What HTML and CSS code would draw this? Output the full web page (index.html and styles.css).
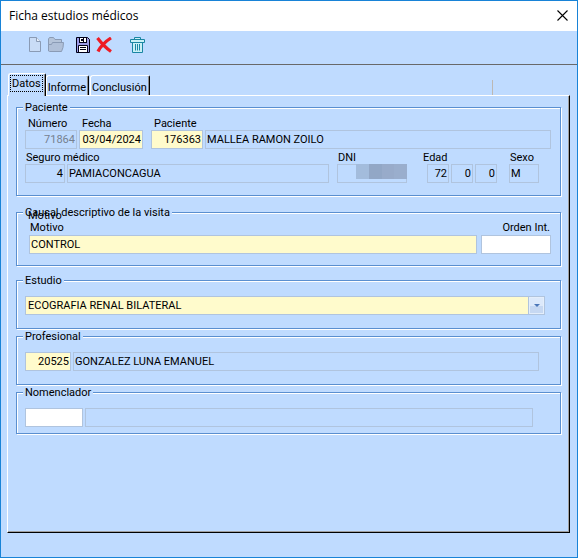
FILE: index.html
```html
<!DOCTYPE html>
<html lang="es">
<head>
<meta charset="utf-8">
<title>Ficha estudios médicos</title>
<link rel="stylesheet" href="styles.css">
</head>
<body>
<main class="window">
  <header class="titlebar">
    <h1>Ficha estudios médicos</h1>
    <button class="close" type="button" aria-label="Cerrar">
      <svg width="11" height="11" viewBox="0 0 11 11"><path d="M.5.5l10 10M10.500.5l-10 10" stroke="#000" stroke-width="1.1"/></svg>
    </button>
  </header>

  <div class="toolbar">
    <div class="tools">
      <button type="button" aria-label="Nuevo">
        <svg width="16" height="16" viewBox="0 0 16 16"><path d="M2.500.5h7l4 4v10h-11z" fill="#c9dcf6" stroke="#8a9bb5"/><path d="M9.500.5v4h4" fill="#e6effb" stroke="#8a9bb5"/></svg>
      </button>
      <button type="button" aria-label="Abrir">
        <svg width="16" height="16" viewBox="0 0 16 16"><path d="M.5 13V2l1-1.500h4l1.500 2h6.500v3" fill="#b5c4d9" stroke="#8a9bb5"/><path d="M.5 14V7.500h3l1-2h11l-.5 5-1.500 4H1.500z" fill="#b0c0d8" stroke="#8a9bb5"/></svg>
      </button>
    </div>
    <div class="tools">
      <button type="button" aria-label="Guardar">
        <svg width="16" height="16" viewBox="0 0 16 16"><path d="M1.500.5h11l2 2v13h-13z" fill="#9a9ae6" stroke="#000018"/><path d="M4 0h8v6H4z" fill="#000018"/><path d="M5 1h3v4H5zM9 1h2v4H9z" fill="#fff"/><path d="M6 2h2v2H6z" fill="#000018"/><path d="M3.500 15V8.500h9V15" fill="#fff" stroke="#000018"/><path d="M5 10.500h6M5 12.500h6" stroke="#000018"/></svg>
      </button>
      <button type="button" aria-label="Eliminar">
        <svg width="16" height="16" viewBox="0 0 16 16"><path d="M1.500 1c3 4 8.500 10 13.500 13.500M15 1C10 4 4 10 2 14.500" fill="none" stroke="#ee1c25" stroke-width="3.200"/></svg>
      </button>
    </div>
    <div class="tools tools-far">
      <button type="button" aria-label="Papelera">
        <svg width="16" height="16" viewBox="0 0 16 16"><path d="M3.500 5h10v10.500h-10z" fill="#c9f0f5" stroke="#1a86a3"/><path d="M1.500 2.500h14v3h-14zM5.500 2V.500h6V2" fill="#c9f0f5" stroke="#1a86a3"/><path d="M6.500 7v6.500M8.500 7v6.500M10.500 7v6.500" stroke="#1a86a3"/></svg>
      </button>
    </div>
  </div>

  <div class="tabs" role="tablist">
    <button class="tab active" type="button" role="tab" aria-selected="true"><span>Datos</span></button>
    <button class="tab" type="button" role="tab" aria-selected="false"><span>Informe</span></button>
    <button class="tab" type="button" role="tab" aria-selected="false"><span>Conclusión</span></button>
    <i class="strip-end"></i>
  </div>

  <form class="panel">
    <fieldset class="group patient">
      <legend>Paciente</legend>
      <div class="row">
        <div class="field w52"><label class="indent" for="numero">Número</label><input id="numero" class="num" value="71864" disabled></div>
        <div class="field w64"><label class="indent" for="fecha">Fecha</label><input id="fecha" class="num edit" value="03/04/2024"></div>
        <div class="field w52 spaced"><label class="indent" for="paciente">Paciente</label><input id="paciente" class="num edit" value="176363"></div>
        <div class="field grow"><input aria-label="Nombre del paciente" value="MALLEA RAMON ZOILO" readonly></div>
      </div>
      <div class="row insurance">
        <div class="field w40"><label for="seguro">Seguro médico</label><input id="seguro" class="num" value="4" readonly></div>
        <div class="field grow"><input aria-label="Nombre del seguro" value="PAMIACONCAGUA" readonly></div>
        <div class="field w70 spaced"><label for="dni">DNI</label><div class="masked"><input id="dni" readonly><span class="mask"><i></i><i></i><i></i><i></i></span></div></div>
        <div class="age">
          <label for="anios">Edad</label>
          <div class="row">
            <input id="anios" class="num" value="72" readonly>
            <input class="num" aria-label="Meses" value="0" readonly>
            <input class="num" aria-label="Días" value="0" readonly>
          </div>
        </div>
        <div class="field w30"><label for="sexo">Sexo</label><input id="sexo" value="M" readonly></div>
      </div>
    </fieldset>

    <fieldset class="group visit">
      <legend>Causal descriptivo de la visita</legend>
      <span class="ghost">Motivo</span>
      <div class="row">
        <div class="field grow"><label for="motivo">Motivo</label><input id="motivo" class="edit" value="CONTROL"></div>
        <div class="field w70"><label class="end" for="orden">Orden Int.</label><input id="orden" class="blank"></div>
      </div>
    </fieldset>

    <fieldset class="group study">
      <legend>Estudio</legend>
      <div class="combo">
        <select class="edit" aria-label="Estudio"><option>ECOGRAFIA RENAL BILATERAL</option></select>
      </div>
    </fieldset>

    <fieldset class="group professional">
      <legend>Profesional</legend>
      <div class="row">
        <div class="field w46"><input class="num edit" aria-label="Código profesional" value="20525"></div>
        <div class="field grow"><input aria-label="Nombre del profesional" value="GONZALEZ LUNA EMANUEL" readonly></div>
      </div>
    </fieldset>

    <fieldset class="group nomenclator">
      <legend>Nomenclador</legend>
      <div class="row">
        <div class="field w58"><input class="blank" aria-label="Código nomenclador"></div>
        <div class="field grow"><input aria-label="Descripción nomenclador" readonly></div>
      </div>
    </fieldset>
  </form>
</main>
</body>
</html>
```
FILE: styles.css
```css
:root {
  --face: #bfdbff;
  --line: #b0c4de;
  --etch: #5a8fd0;
  --edit: #fffbcc;
}

* { box-sizing: border-box; }

body {
  margin: 0;
  font: 11px/13px Roboto, "Liberation Sans", sans-serif;
  color: #000;
}

button, input, select { font: inherit; color: inherit; margin: 0; border-radius: 0; }

.window {
  display: flex;
  flex-direction: column;
  min-height: 100vh;
  border: 1px solid #1883d7;
  background: var(--face);
}

.titlebar {
  display: flex;
  align-items: center;
  justify-content: space-between;
  height: 30px;
  padding: 0 8px;
  background: #fff;
}

.titlebar h1 {
  margin: 0;
  font: 12px/16px "Open Sans", "Noto Sans", sans-serif;
}

.close { padding: 0 1px 2px; border: 0; background: none; }
.close svg, .tools svg { display: block; }

.toolbar {
  display: flex;
  gap: 11px;
  height: 34px;
  padding: 6px 26px 0;
  border-bottom: 1px solid #696969;
}

.tools { display: flex; gap: 5px; align-items: flex-start; }
.tools-far { margin-left: 6px; }
.tools button { padding: 0; border: 0; background: none; }

.tabs {
  display: flex;
  align-items: flex-end;
  height: 30px;
  padding: 0 7px;
}

.tab {
  height: 20px;
  margin-right: 1px;
  padding: 3px 2px 0 1px;
  border: 1px solid #fff;
  border-right: 1px solid #000;
  border-bottom: 0;
  border-radius: 3px 2px 0 0;
  background: var(--face);
  box-shadow: inset -1px 0 0 #8c8c8c;
}

.tab.active {
  position: relative;
  height: 23px;
  margin: 0 0 -1px;
  padding: 0 3px 3px 2px;
}

.tab span { display: block; }
.tab.active span { padding: 1px; outline: 1px dotted #000; }

.strip-end {
  width: 1px;
  height: 15px;
  margin: 0 77px 0 auto;
  background: #bcb8b4;
}

.panel {
  flex: 1;
  margin: 0 7px 24px 6px;
  padding: 5px 8px;
  border: 1px solid;
  border-color: #fff #000 #000 #fff;
  box-shadow: inset -1px -1px 0 #a0a0a0;
}

.group {
  position: relative;
  min-width: 0;
  margin: 0;
  padding: 9px 21px 13px 8px;
  border: 1px solid var(--etch);
  box-shadow: 1px 1px 0 #fff, inset 1px 1px 0 #fff;
}

.group legend {
  margin-left: -2px;
  padding: 0 2px;
  background: var(--face);
}

.patient { margin-bottom: 10px; padding: 3px 9px 12px 8px; }
.visit { margin-bottom: 8px; padding: 2px 9px 11px 8px; }
.study { margin-bottom: 1px; padding-right: 15px; }
.professional { margin-bottom: 1px; }
.nomenclator { padding-right: 27px; padding-bottom: 6px; }

.row { display: flex; gap: 2px; align-items: flex-end; }
.insurance { margin: 2px 12px 0 0; }
.visit .row { gap: 4px; padding-left: 4px; }
.visit label { margin-bottom: 1px; }

.field { flex: none; }
.field label, .age label { display: block; padding-left: 1px; white-space: nowrap; }
.field .indent { padding-left: 3px; }
.field .end { text-align: right; padding-right: 1px; }
.spaced { margin-left: 6px; }
.grow { flex: 1; min-width: 0; }
.w30 { width: 30px; }
.w40 { width: 40px; }
.w46 { width: 46px; }
.w52 { width: 52px; }
.w58 { width: 58px; }
.w64 { width: 64px; }
.w70 { width: 70px; }

input, select {
  display: block;
  width: 100%;
  height: 19px;
  padding: 0 1px;
  border: 1px solid var(--line);
  background: var(--face);
  outline: 0;
}

input:disabled { color: #76818f; }
.num { text-align: right; }
.edit { background: var(--edit); }
.blank { background: #fff; }

.age { margin: 0 10px 0 13px; }
.age .row { padding-left: 5px; }
.age input { width: 22px; }

.masked { position: relative; }
.mask {
  position: absolute;
  inset: 0 0 4px 19px;
  display: flex;
}
.mask i { flex: 1; background: #a3bcdc; }
.mask i:nth-child(2) { background: #92a7c6; }
.mask i:nth-child(3) { background: #98abca; }
.mask i:nth-child(4) { background: #9aaecd; }

.ghost { position: absolute; top: -10px; left: 11px; }

.combo { position: relative; }
.combo select { appearance: none; padding: 0 16px 0 2px; }
.combo::before {
  content: "";
  position: absolute;
  inset: 0 0 0 auto;
  width: 15px;
  border: 1px solid var(--line);
  background: linear-gradient(#dce9fb 50%, #c6d8f2 50%);
  box-shadow: inset 0 0 0 1px #e4eefb;
  pointer-events: none;
}
.combo::after {
  content: "";
  position: absolute;
  top: 8px;
  right: 5px;
  border: solid transparent;
  border-width: 3px 3px 0;
  border-top-color: #4a76b8;
  pointer-events: none;
}
```
